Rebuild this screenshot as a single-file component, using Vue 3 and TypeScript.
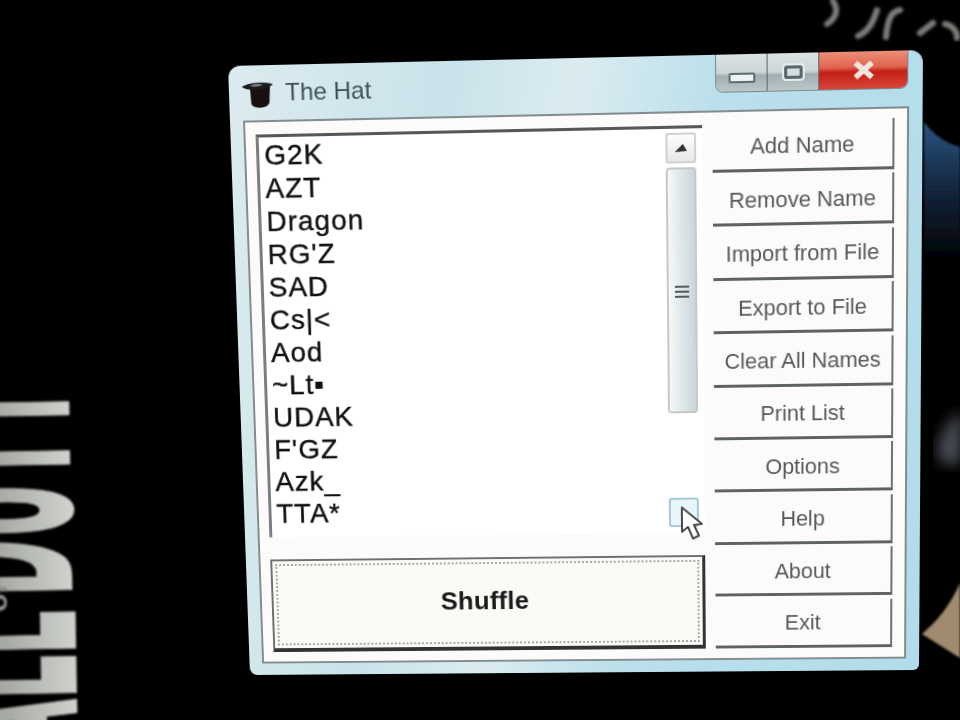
<script setup lang="ts">
import { computed } from 'vue'

const WIN_W = 680
const WIN_H = 620

// window corners as seen on the photographed monitor: TL, TR, BR, BL
const corners = [[228, 66], [923, 50], [919, 670], [250, 675]]

const windowStyle = computed(() => {
  const [[x0, y0], [x1, y1], [x2, y2], [x3, y3]] = corners
  const dx1 = x1 - x2
  const dx2 = x3 - x2
  const sx = x0 - x1 + x2 - x3
  const dy1 = y1 - y2
  const dy2 = y3 - y2
  const sy = y0 - y1 + y2 - y3
  const det = dx1 * dy2 - dx2 * dy1
  const g = (sx * dy2 - dx2 * sy) / det
  const h = (dx1 * sy - sx * dy1) / det
  const a = x1 - x0 + g * x1
  const b = x3 - x0 + h * x3
  const d = y1 - y0 + g * y1
  const e = y3 - y0 + h * y3
  const m = [
    a / WIN_W, d / WIN_W, 0, g / WIN_W,
    b / WIN_H, e / WIN_H, 0, h / WIN_H,
    0, 0, 1, 0,
    x0, y0, 0, 1,
  ]
  return { transform: `matrix3d(${m.join(',')})` }
})

const names = ['G2K', 'AZT', 'Dragon', "RG'Z", 'SAD', 'Cs|<', 'Aod', '~Lt▪', 'UDAK', "F'GZ", 'Azk_', 'TTA*']
const actions = ['Add Name', 'Remove Name', 'Import from File', 'Export to File', 'Clear All Names', 'Print List', 'Options', 'Help', 'About', 'Exit']
</script>

<template>
  <div class="desktop">
    <svg class="wallpaper" width="960" height="720" viewBox="0 0 960 720">
      <defs>
        <linearGradient id="silver" x1="0" y1="0" x2="0" y2="1">
          <stop offset="0" stop-color="#6f7470" />
          <stop offset="0.55" stop-color="#a9aca6" />
          <stop offset="0.8" stop-color="#cfd2cc" />
          <stop offset="1" stop-color="#dfe2dc" />
        </linearGradient>
        <linearGradient id="blue" x1="0" y1="0" x2="0" y2="1">
          <stop offset="0" stop-color="#2a5480" />
          <stop offset="0.5" stop-color="#12233a" />
          <stop offset="1" stop-color="#000" />
        </linearGradient>
        <filter id="soft"><feGaussianBlur stdDeviation="1.2" /></filter>
        <filter id="scrawl"><feGaussianBlur stdDeviation="1.6" /></filter>
        <filter id="softer"><feGaussianBlur stdDeviation="7" /></filter>
      </defs>
      <g class="cod" filter="url(#soft)">
        <text transform="translate(71,596) rotate(-91) scale(0.304,1)" fill="url(#silver)" stroke="url(#silver)" stroke-width="3">DUTY</text>
        <text transform="translate(74,610) rotate(-91) scale(0.304,1)" fill="url(#silver)" stroke="url(#silver)" stroke-width="3" text-anchor="end">CALL</text>
        <text class="cod-of" transform="translate(7,612) rotate(-90)" fill="#8d8f8b">OF</text>
      </g>
      <path d="M924 122 C935 136 946 143 960 147 L960 265 L924 265 Z" fill="url(#blue)" filter="url(#soft)" />
      <path d="M936 452 C942 428 952 416 962 412 L962 462 L946 466 Z" fill="#474b52" filter="url(#softer)" />
      <path d="M922 634 C936 622 950 606 960 583 L960 658 Z" fill="#a08a70" filter="url(#soft)" />
      <g class="scribble" filter="url(#scrawl)">
        <path d="M833 1 C839 10 836 18 827 24" />
        <path d="M877 10 C873 23 868 32 858 36" />
        <path d="M900 10 C891 12 888 18 886 37" />
        <path d="M920 33 L933 23" />
        <path d="M945 24 C952 25 958 32 957 38" />
      </g>
    </svg>

    <div class="window" :style="windowStyle">
      <div class="titlebar">
        <svg class="hat" width="32" height="26" viewBox="0 0 32 26">
          <path d="M8 5 L28 4 L27 21 C25 27 11 27 9 22 Z" fill="#17100f" />
          <path d="M0 5 C6 0 26 0 31 3 C26 8 6 10 0 5 Z" fill="#1a1c1d" />
          <path d="M8 4 C12 2 18 2 21 3 C18 5 11 5 8 4 Z" fill="#8c8f8c" />
        </svg>
        <span class="title">The Hat</span>
        <div class="caption-buttons">
          <div class="cap cap-min"><i></i></div>
          <div class="cap cap-max"><i></i></div>
          <div class="cap cap-close">
            <svg width="24" height="20" viewBox="0 0 24 20">
              <path d="M4 3 L20 17 M20 3 L4 17" stroke="#f0e6e0" stroke-width="5.5" fill="none" />
            </svg>
          </div>
        </div>
      </div>

      <div class="panel">
        <div class="left">
          <div class="listbox">
            <ul class="names">
              <li v-for="name in names" :key="name">{{ name }}</li>
            </ul>
            <div class="scrollbar">
              <div class="sb-btn">
                <svg width="14" height="10" viewBox="0 0 14 10"><path d="M9 1 L13 8 L1 9 Z" fill="#333" /></svg>
              </div>
              <div class="sb-thumb">
                <span></span><span></span><span></span>
              </div>
              <div class="sb-btn sb-down">
                <svg class="cursor" width="26" height="38" viewBox="0 0 26 38">
                  <path d="M3 2 L3 27 L9 22 L14 34 L20 31 L15 20 L23 19 Z" fill="#fff" stroke="#4a4a4a" stroke-width="2" stroke-linejoin="round" />
                </svg>
              </div>
            </div>
          </div>
          <button class="shuffle" type="button"><span class="focus">Shuffle</span></button>
        </div>
        <div class="actions">
          <button v-for="label in actions" :key="label" class="action" type="button">{{ label }}</button>
        </div>
      </div>
    </div>
  </div>
</template>

<style scoped>
.desktop {
  position: relative;
  width: 960px;
  height: 720px;
  overflow: hidden;
  background: #000;
  font-family: "Liberation Sans", Arial, sans-serif;
}

.wallpaper {
  position: absolute;
  left: 0;
  top: 0;
}

.cod text {
  font-family: "DejaVu Sans", sans-serif;
  font-weight: 700;
  font-size: 230px;
}

.cod .cod-of {
  font-size: 22px;
  stroke: none;
}

.scribble path {
  fill: none;
  stroke: #7c7c78;
  stroke-width: 6;
  stroke-linecap: round;
}

.window {
  position: absolute;
  left: 0;
  top: 0;
  width: 680px;
  height: 620px;
  box-sizing: border-box;
  display: flex;
  flex-direction: column;
  transform-origin: 0 0;
  border-radius: 12px 12px 6px 8px;
  background: linear-gradient(100deg, #dcebef 0%, #c9e3ea 28%, #dbecf0 44%, #bbdfeb 62%, #b2dcea 100%);
  filter: blur(0.7px);
}

.titlebar {
  position: relative;
  flex: none;
  height: 54px;
  display: flex;
  align-items: center;
  padding: 0 0 0 13px;
  box-sizing: border-box;
  gap: 11px;
}

.hat {
  flex: none;
  margin-top: 4px;
}

.title {
  font-size: 24px;
  color: #3f5055;
}

.caption-buttons {
  position: absolute;
  right: 14px;
  top: 0;
  height: 36px;
  display: flex;
  border: 1px solid #7a8a90;
  border-top: none;
  border-radius: 0 0 8px 8px;
  overflow: hidden;
}

.cap {
  height: 100%;
  display: flex;
  align-items: center;
  justify-content: center;
}

.cap-min {
  width: 49px;
  background: linear-gradient(#dbe3e4 0%, #ccd5d7 50%, #a2adb1 58%, #bcc7ca 100%);
  border-right: 1px solid #59666b;
}

.cap-min i {
  width: 22px;
  height: 6px;
  margin-top: 9px;
  background: #eef3f3;
  border: 2px solid #5f6c70;
  border-radius: 2px;
}

.cap-max {
  width: 49px;
  background: linear-gradient(#dbe3e4 0%, #ccd5d7 50%, #a2adb1 58%, #bcc7ca 100%);
  border-right: 1px solid #59666b;
}

.cap-max i {
  width: 12px;
  height: 7px;
  border: 3px solid #59666b;
  outline: 2px solid #e5ecec;
  background: #d6dedf;
  border-radius: 2px;
}

.cap-close {
  width: 85px;
  background: linear-gradient(#ec8f78 0%, #e0644f 42%, #c41e14 55%, #d9463a 100%);
}

.panel {
  flex: 1;
  min-height: 0;
  margin: 0 13px 12px;
  padding: 9px 12px 10px 10px;
  border: 2px solid #838d90;
  background: #fdfbf9;
  display: flex;
  gap: 10px;
}

.left {
  width: 441px;
  padding-top: 3px;
  display: flex;
  flex-direction: column;
  gap: 23px;
}

.listbox {
  flex: 1;
  min-height: 0;
  display: flex;
  justify-content: space-between;
  background: #fff;
  border-top: 3px solid #55585a;
  border-left: 3px solid #7b7e7f;
  padding-right: 6px;
}

.names {
  list-style: none;
  margin: 0;
  padding: 1px 0 0 5px;
}

.names li {
  height: 33px;
  line-height: 33px;
  font-size: 28px;
  letter-spacing: 1px;
  color: #111;
  -webkit-text-stroke: 0.4px #111;
}

.scrollbar {
  width: 30px;
  display: flex;
  flex-direction: column;
  padding: 4px 0 6px;
  gap: 4px;
}

.sb-btn {
  position: relative;
  flex: none;
  height: 30px;
  box-sizing: border-box;
  border: 2px solid #cfd2d0;
  border-radius: 3px;
  background: linear-gradient(#fdfdfb, #e8e9e6);
  display: flex;
  align-items: center;
  justify-content: center;
}

.sb-thumb {
  flex: none;
  height: 245px;
  box-sizing: border-box;
  border: 2px solid #c6c9c8;
  border-radius: 4px;
  background: linear-gradient(90deg, #f8f8f6 0%, #dde7ea 50%, #ccd6da 100%);
  display: flex;
  flex-direction: column;
  align-items: center;
  justify-content: center;
  gap: 3px;
}

.sb-thumb span {
  width: 14px;
  height: 2px;
  background: #55595b;
}

.sb-down {
  margin-top: auto;
  border-color: #a9c6d2;
  background: #e8f6fb;
}

.cursor {
  position: absolute;
  left: 8px;
  top: 6px;
}

.shuffle {
  flex: none;
  height: 97px;
  padding: 3px;
  box-sizing: border-box;
  font: inherit;
  background: #fbfaf7;
  border: 2px solid #6d6f70;
  border-right-width: 3px;
  border-bottom-width: 4px;
  border-right-color: #333;
  border-bottom-color: #333;
}

.focus {
  width: 100%;
  height: 100%;
  display: flex;
  align-items: center;
  justify-content: center;
  box-sizing: border-box;
  padding: 0 4px 4px 0;
  border: 2px dotted #a5a7a5;
  font-size: 26px;
  font-weight: 700;
  letter-spacing: 0.3px;
  color: #1a1a1a;
}

.actions {
  width: 177px;
  display: flex;
  flex-direction: column;
  gap: 3.4px;
}

.action {
  flex: none;
  height: 50px;
  padding: 3px 0 0;
  font: inherit;
  font-size: 21.5px;
  color: #555a5c;
  background: transparent;
  border: none;
  border-right: 2px solid #6f7272;
  border-bottom: 3px solid #5f6262;
}
</style>

<style>
html,
body {
  margin: 0;
  background: #000;
}
</style>
